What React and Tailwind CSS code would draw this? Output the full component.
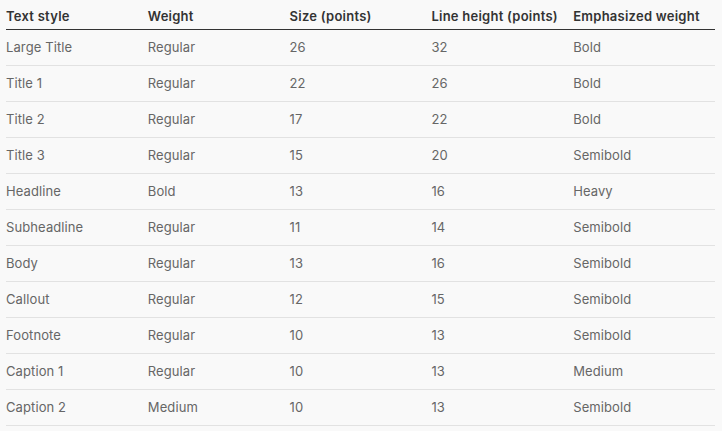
import React from 'react';

const rows = [
  ['Large Title', 'Regular', '26', '32', 'Bold'],
  ['Title 1', 'Regular', '22', '26', 'Bold'],
  ['Title 2', 'Regular', '17', '22', 'Bold'],
  ['Title 3', 'Regular', '15', '20', 'Semibold'],
  ['Headline', 'Bold', '13', '16', 'Heavy'],
  ['Subheadline', 'Regular', '11', '14', 'Semibold'],
  ['Body', 'Regular', '13', '16', 'Semibold'],
  ['Callout', 'Regular', '12', '15', 'Semibold'],
  ['Footnote', 'Regular', '10', '13', 'Semibold'],
  ['Caption 1', 'Regular', '10', '13', 'Medium'],
  ['Caption 2', 'Medium', '10', '13', 'Semibold'],
];

const headers = ['Text style', 'Weight', 'Size (points)', 'Line height (points)', 'Emphasized weight'];

const App = () => {
  return (
    <div className="min-h-[431px] w-[722px] bg-[#f9f9f9] pl-[6px] pr-[7px] font-['Inter',sans-serif] text-[13px]">
      <div className="grid grid-cols-5 border-b border-[#333] pt-[8px] pb-[5px] leading-[16px] font-semibold tracking-[0.25px] text-[#333]">
        {headers.map((h) => (
          <div key={h}>{h}</div>
        ))}
      </div>
      {rows.map((r) => (
        <div key={r[0]} className="grid h-[36px] grid-cols-5 items-center border-b border-[#e2e2e2] tracking-[0.1px] text-[#666]">
          {r.map((c, i) => (
            <div key={i}>{c}</div>
          ))}
        </div>
      ))}
    </div>
  );
};

export default App;
